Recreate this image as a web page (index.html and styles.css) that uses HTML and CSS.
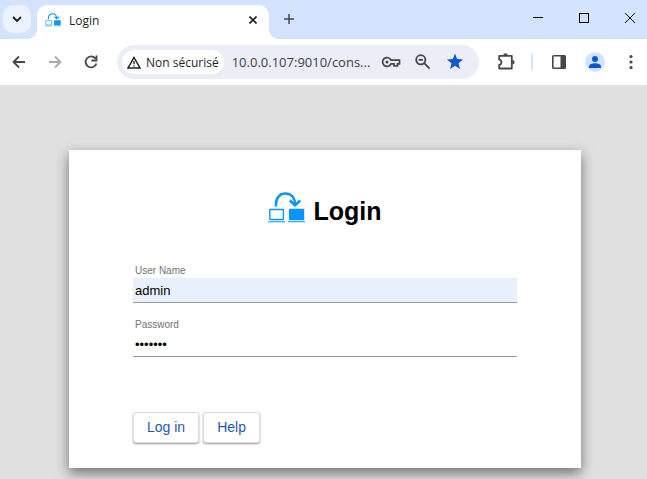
FILE: index.html
```html
<!DOCTYPE html>
<html lang="en">
<head>
  <meta charset="UTF-8" />
  <title>Login</title>
  <link rel="stylesheet" href="styles.css">
</head>
<body>

<!-- shared logo -->
<svg class="defs" width="0" height="0" aria-hidden="true">
  <symbol id="logo" viewBox="0 0 37 32">
    <g fill="none" stroke="#0a94ff">
      <path d="M8 14.500V12C8 5.500 12 1.500 17.500 1.500S27 5.500 27 13" stroke-width="2.500"/>
      <path d="M21.800 8.500L27 13.300L32.300 8.500" stroke-width="2.600"/>
      <rect x="1.800" y="17.500" width="13.600" height="10" rx="0.500" stroke-width="1.400"/>
      <path d="M0 29.700H17M20 29.700H37" stroke-width="1.100"/>
    </g>
    <rect x="21" y="16.800" width="15.200" height="11.400" rx="0.800" fill="#0a94ff"/>
  </symbol>
</svg>

<!-- Tab strip -->
<div class="tab-strip">
  <button class="tab-search" aria-label="Search tabs">
    <svg width="10" height="6" viewBox="0 0 10 6"><path d="M1 1l4 4 4-4" fill="none" stroke="#1f1f1f" stroke-width="1.800"/></svg>
  </button>
  <div class="tab">
    <svg class="tab-icon" width="16" height="16"><use href="#logo"/></svg>
    <span class="tab-title">Login</span>
    <button class="tab-close" aria-label="Close tab">
      <svg width="8" height="8" viewBox="0 0 8 8"><path d="M.5.5l7 7m0-7l-7 7" stroke="#1f1f1f" stroke-width="1.600"/></svg>
    </button>
  </div>
  <button class="new-tab" aria-label="New tab">
    <svg width="12" height="12" viewBox="0 0 12 12"><path d="M6 1v10M1 6h10" stroke="#474747" stroke-width="1.500"/></svg>
  </button>
  <div class="window-controls">
    <button aria-label="Minimize"><svg width="10" height="10"><path d="M0 4.500h10" stroke="#000"/></svg></button>
    <button aria-label="Maximize"><svg width="10" height="10"><rect x=".5" y=".5" width="9" height="9" fill="none" stroke="#000"/></svg></button>
    <button aria-label="Close"><svg width="10" height="10"><path d="M0 0l10 10m0-10L0 10" stroke="#000"/></svg></button>
  </div>
</div>

<!-- Toolbar -->
<div class="toolbar">
  <button aria-label="Back">
    <svg width="20" height="20" viewBox="0 0 20 20"><path d="M16 10H5M10 4.500L4.500 10l5.500 5.500" fill="none" stroke="#474747" stroke-width="1.800"/></svg>
  </button>
  <button aria-label="Forward">
    <svg width="20" height="20" viewBox="0 0 20 20"><path d="M4 10h11M10 4.500l5.500 5.500-5.500 5.500" fill="none" stroke="#acacac" stroke-width="1.800"/></svg>
  </button>
  <button aria-label="Reload">
    <svg width="20" height="20" viewBox="0 0 20 20"><path d="M14.300 6.300A5.500 5.500 0 1 0 15.400 11.500M15.500 3.500v5h-5" fill="none" stroke="#474747" stroke-width="1.800"/></svg>
  </button>
  <div class="omnibox">
    <button class="chip">
      <svg width="14" height="13" viewBox="0 0 14 13"><path d="M7 1.500L13 12H1z" fill="none" stroke="#1f1f1f" stroke-width="1.500"/><path d="M7 5v3.300M7 9.200v1.400" stroke="#1f1f1f" stroke-width="1.300"/></svg>
      Non sécurisé
    </button>
    <input class="url" type="text" value="10.0.0.107:9010/cons..." aria-label="Address" />
    <div class="omni-actions">
      <button aria-label="Passwords">
        <svg width="20" height="20" viewBox="0 0 20 20" fill="none" stroke="#474747" stroke-width="1.700"><path d="M10 8.200A4.400 4.400 0 1 0 10 11.800H13V14H16.500V11.800H18.500V8.200Z"/><circle cx="6" cy="10" r="1.500" fill="#474747" stroke="none"/></svg>
      </button>
      <button aria-label="Zoom">
        <svg width="20" height="20" viewBox="0 0 20 20" fill="none" stroke="#474747" stroke-width="1.800"><circle cx="7.800" cy="7.800" r="4.600"/><path d="M11.200 11.200l5.400 5.400M5.600 7.800h4.400"/></svg>
      </button>
      <button aria-label="Bookmark">
        <svg width="20" height="20" viewBox="0 0 20 20"><path d="M10 1.500l2.100 5.500 6 .4-4.600 3.800 1.500 5.900-5-3.300-5 3.300 1.500-5.900L1.900 7.400l6-.4z" fill="#0b57d0"/></svg>
      </button>
    </div>
  </div>
  <button aria-label="Extensions">
    <svg width="20" height="20" viewBox="0 0 20 20"><path d="M4.200 3.900h12.600v12.600H4.200V13q2.200-.4 2.200-2.700T4.200 7.600z" fill="none" stroke="#474747" stroke-width="1.800" stroke-linejoin="round"/><path d="M8.200 3.500a2.300 2.300 0 0 1 4.600 0zM17.300 8a2.300 2.300 0 0 1 0 4.600z" fill="#474747"/></svg>
  </button>
  <span class="divider"></span>
  <button aria-label="Side panel">
    <svg width="20" height="20" viewBox="0 0 20 20"><rect x="3.800" y="3.800" width="12.400" height="12.400" rx="0.800" fill="none" stroke="#474747" stroke-width="1.600"/><path d="M11.500 3.500h5v13h-5z" fill="#474747"/></svg>
  </button>
  <button aria-label="Profile">
    <svg width="20" height="20" viewBox="0 0 20 20"><circle cx="10" cy="10" r="10" fill="#d3e3fd"/><circle cx="10" cy="7" r="3" fill="#0b57d0"/><path d="M4 16v-1.500c0-2.200 3.500-3.300 6-3.300s6 1.100 6 3.300V16z" fill="#0b57d0"/></svg>
  </button>
  <button aria-label="Menu">
    <svg width="20" height="20" viewBox="0 0 20 20" fill="#474747"><circle cx="10" cy="4.500" r="1.600"/><circle cx="10" cy="10" r="1.600"/><circle cx="10" cy="15.500" r="1.600"/></svg>
  </button>
</div>

<!-- Login page -->
<main class="page">
  <form class="card">
    <h1>
      <svg width="37" height="32"><use href="#logo"/></svg>
      Login
    </h1>
    <div class="field">
      <label for="username">User Name</label>
      <input class="filled" type="text" id="username" value="admin" />
    </div>
    <div class="field">
      <label for="password">Password</label>
      <input type="password" id="password" value="console" />
    </div>
    <div class="actions">
      <button type="submit">Log in</button>
      <button type="button">Help</button>
    </div>
  </form>
</main>

</body>
</html>
```
FILE: styles.css
```css
* {
    box-sizing: border-box;
}
body {
    margin: 0;
    min-height: 100vh;
    display: flex;
    flex-direction: column;
    background: #e0e0e0;
    font-family: "Liberation Sans", Arial, sans-serif;
}
button {
    padding: 0;
    border: none;
    background: none;
    cursor: pointer;
}
svg {
    display: block;
    flex: none;
}
.defs {
    position: absolute;
}

/* Tab strip */
.tab-strip {
    display: flex;
    height: 39px;
    padding: 5px 0 0 3px;
    background: #d3e3fd;
    font-family: "Open Sans", "Noto Sans", sans-serif;
    font-size: 12px;
}
.tab-strip button {
    display: flex;
    align-items: center;
    justify-content: center;
    height: 28px;
}
.tab-search {
    width: 28px;
    margin-right: 6px;
    border-radius: 10px;
    background: #ecf3fe;
    z-index: 1;
}
.tab {
    position: relative;
    display: flex;
    align-items: center;
    gap: 8px;
    width: 232px;
    padding: 0 6px 4px 8px;
    background: #fff;
    border-radius: 10px 10px 0 0;
    color: #1f1f1f;
}
.tab::before,
.tab::after {
    content: "";
    position: absolute;
    bottom: 0;
    width: 10px;
    height: 10px;
}
.tab::before {
    left: -10px;
    background: radial-gradient(circle at 0 0, #d3e3fd 10px, #fff 10px);
}
.tab::after {
    right: -10px;
    background: radial-gradient(circle at 100% 0, #d3e3fd 10px, #fff 10px);
}
.tab-title {
    flex: 1;
}
.tab-close {
    width: 20px;
}
.new-tab {
    width: 20px;
    margin-left: 10px;
}
.window-controls {
    display: flex;
    gap: 12px;
    margin-left: auto;
}
.window-controls button {
    width: 34px;
    height: 26px;
}

/* Toolbar */
.toolbar {
    display: flex;
    align-items: center;
    gap: 16px;
    height: 46px;
    padding: 0 6px 0 9px;
    background: #fff;
}
.omnibox {
    flex: 1;
    min-width: 0;
    display: flex;
    align-items: center;
    height: 34px;
    padding: 0 14px 0 5px;
    border-radius: 17px;
    background: #ebeef7;
    font-family: "Open Sans", "Noto Sans", sans-serif;
}
.chip {
    display: flex;
    align-items: center;
    gap: 5px;
    height: 24px;
    padding: 0 5px;
    border-radius: 12px;
    background: #fff;
    color: #1f1f1f;
    font: 500 12px "Open Sans", "Noto Sans", sans-serif;
    white-space: nowrap;
}
.url {
    flex: 1;
    min-width: 0;
    margin-left: 8px;
    padding: 0;
    border: none;
    outline: none;
    background: none;
    color: #3c4043;
    font: 13px "Open Sans", "Noto Sans", sans-serif;
}
.omni-actions {
    display: flex;
    gap: 12px;
}
.divider {
    width: 2px;
    height: 16px;
    background: #d3e3fd;
}

/* Login card */
.page {
    flex: 1;
    padding: 65px 66px 11px 69px;
}
.card {
    max-width: 512px;
    margin: 0 auto;
    padding: 42px 64px 25px;
    background: #fff;
    box-shadow: 0 5px 12px rgba(0, 0, 0, 0.5);
}
.card h1 {
    display: flex;
    justify-content: center;
    gap: 8px;
    margin: 0 0 40px;
    color: #000;
    font-size: 25px;
    line-height: 38px;
    height: 32px;
}
.field {
    margin-bottom: 15px;
}
.field label {
    display: block;
    padding-left: 2px;
    color: #737373;
    font-size: 10px;
    line-height: 14px;
}
.field input {
    display: block;
    width: 100%;
    height: 25px;
    padding: 0 2px;
    border: none;
    border-bottom: 1px solid #999;
    outline: none;
    background: #fff;
    color: #000;
    font: 13px "Liberation Sans", Arial, sans-serif;
}
.field input.filled {
    background: #e8f0fe;
}
.actions {
    display: flex;
    gap: 4px;
    margin-top: 55px;
}
.actions button {
    height: 31px;
    padding: 0 13px 2px;
    border: 1px solid #ddd;
    border-radius: 3px;
    background: #fff;
    box-shadow: 0 1px 2px rgba(0, 0, 0, 0.4);
    color: #1f55b5;
    font: 14px "Liberation Sans", Arial, sans-serif;
}
```
